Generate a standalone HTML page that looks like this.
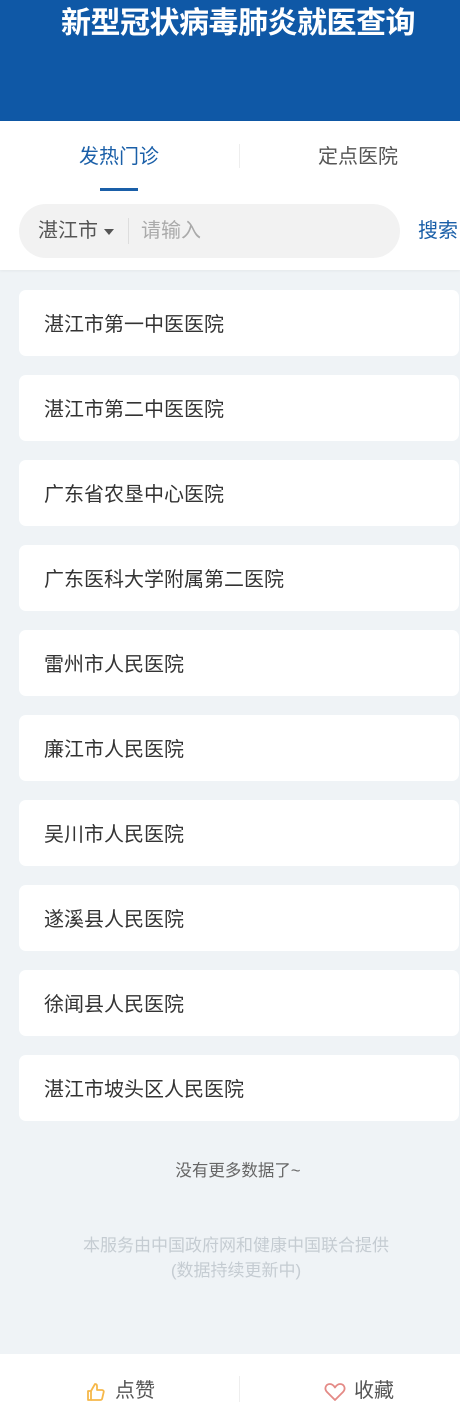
<!DOCTYPE html>
<html><head><meta charset="utf-8"><style>
*{margin:0;padding:0;box-sizing:border-box}
body{width:460px;height:1424px;background:#eff3f6;font-family:"Liberation Sans","Noto Sans CJK SC",sans-serif;position:relative;overflow:hidden}
.hd{position:absolute;top:0;left:0;width:460px;height:121px;background:#0f58a6}
.hd h1{position:absolute;top:5px;left:0;width:476px;text-align:center;color:#fff;font-size:30px;font-weight:bold;line-height:38px;letter-spacing:-0.5px}
.top{position:absolute;top:121px;left:0;width:460px;height:149px;background:#fff;box-shadow:0 1px 3px rgba(0,0,0,.05)}
.tab{position:absolute;top:22px;font-size:20px;line-height:28px}
.t1{left:79px;color:#1a5fa8}
.t2{left:318px;color:#555}
.ul{position:absolute;left:100px;top:67px;width:38px;height:3px;background:#1a5fa8}
.dv{position:absolute;left:239px;top:23px;width:1px;height:24px;background:#eee}
.sb{position:absolute;left:19px;top:83px;width:381px;height:54px;border-radius:27px;background:#f2f2f2}
.city{position:absolute;left:19px;top:13px;font-size:20px;color:#555;line-height:28px}
.tri{position:absolute;left:85px;top:25px;border-left:5px solid transparent;border-right:5px solid transparent;border-top:6px solid #555}
.sp{position:absolute;left:109px;top:14px;width:1px;height:26px;background:#ddd}
.ph{position:absolute;left:122px;top:13px;font-size:20px;color:#aaa;line-height:28px}
.so{position:absolute;left:418px;top:96px;font-size:20px;color:#1a5fa8;line-height:28px}
.card{position:absolute;left:19px;width:440px;height:66px;background:#fff;border-radius:7px;font-size:20px;color:#333;line-height:70px;padding-left:25px}
.nm{position:absolute;top:1160px;left:8px;width:460px;text-align:center;font-size:16.5px;color:#666;line-height:22px}
.ft{position:absolute;top:1233px;left:6px;width:460px;text-align:center;font-size:17px;color:#c5ccd2;line-height:25px}
.bb{position:absolute;top:1354px;left:0;width:460px;height:70px;background:#fff}
.bb span{position:absolute;top:23px;font-size:20px;color:#555;line-height:28px}
</style></head><body>
<div class="hd"><h1>新型冠状病毒肺炎就医查询</h1></div>
<div class="top">
<div class="tab t1">发热门诊</div><div class="dv"></div><div class="tab t2">定点医院</div>
<div class="ul"></div>
<div class="sb"><div class="city">湛江市</div><div class="tri"></div><div class="sp"></div><div class="ph">请输入</div></div>
<div class="so">搜索</div>
</div>
<div class="card" style="top:290px">湛江市第一中医医院</div>
<div class="card" style="top:375px">湛江市第二中医医院</div>
<div class="card" style="top:460px">广东省农垦中心医院</div>
<div class="card" style="top:545px">广东医科大学附属第二医院</div>
<div class="card" style="top:630px">雷州市人民医院</div>
<div class="card" style="top:715px">廉江市人民医院</div>
<div class="card" style="top:800px">吴川市人民医院</div>
<div class="card" style="top:885px">遂溪县人民医院</div>
<div class="card" style="top:970px">徐闻县人民医院</div>
<div class="card" style="top:1055px">湛江市坡头区人民医院</div>
<div class="nm">没有更多数据了~</div>
<div class="ft">本服务由中国政府网和健康中国联合提供<br>(数据持续更新中)</div>
<div class="bb">
<svg style="position:absolute;left:86px;top:28px" width="20" height="20" viewBox="0 0 20 20" fill="none" stroke="#f6b84a" stroke-width="1.8" stroke-linejoin="round"><path d="M2 9h3v9H2z"/><path d="M5 9l4-7c1.5 0 2 1 2 2v4h5c1 0 2 1 1.7 2l-1.5 6.5c-.2 1-1 1.5-2 1.5H5"/></svg>
<span style="left:115px">点赞</span>
<div style="position:absolute;left:239px;top:22px;width:1px;height:26px;background:#eee"></div>
<svg style="position:absolute;left:324px;top:28px" width="22" height="20" viewBox="0 0 22 20" fill="none" stroke="#e48a86" stroke-width="1.8" stroke-linejoin="round"><path d="M11 18L3 10C0 7 1.5 2 6 2c2.5 0 4 2 5 3.5C12 4 13.5 2 16 2c4.5 0 6 5 3 8z"/></svg>
<span style="left:354px">收藏</span>
</div>
</body></html>
